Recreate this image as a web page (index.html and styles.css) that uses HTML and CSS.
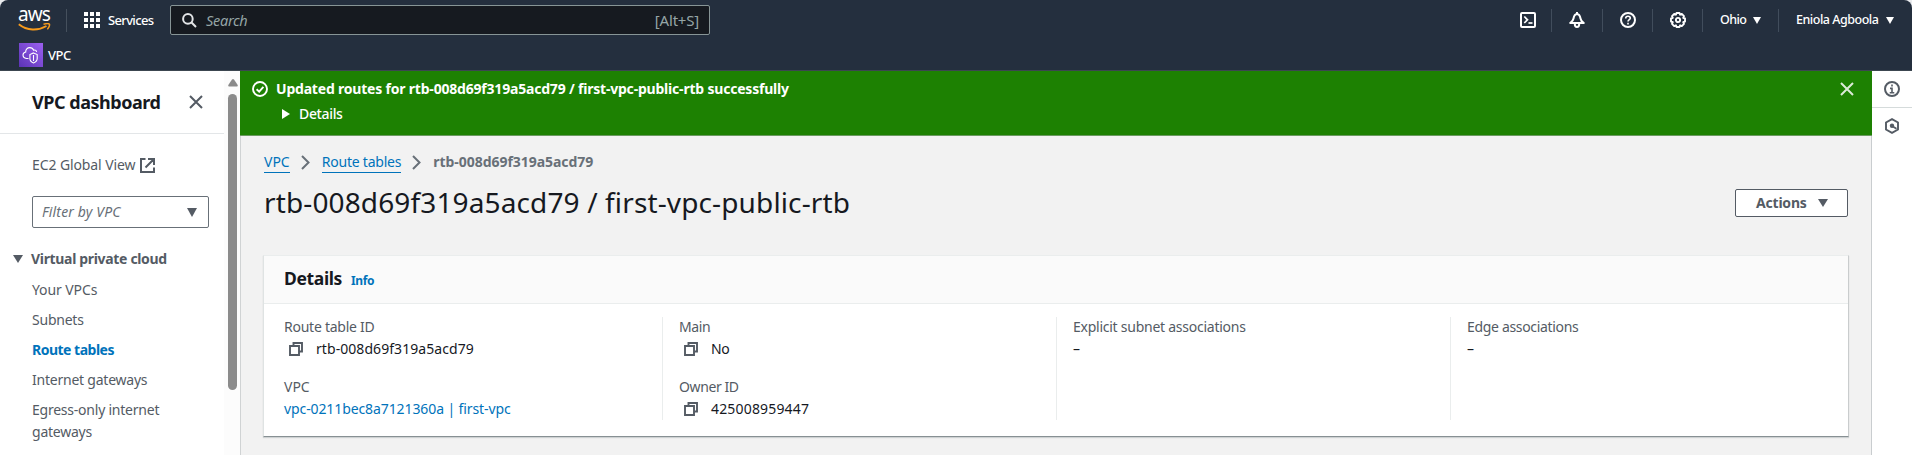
FILE: index.html
```html
<!DOCTYPE html>
<html lang="en">
<head>
<meta charset="utf-8">
<title>VPC dashboard</title>
<link rel="stylesheet" href="styles.css">
</head>
<body>
<header class="top">
  <div class="nav">
    <div class="logo">
      <span class="logo-text">aws</span>
      <svg class="smile" width="34" height="9" viewBox="0 0 34 9"><path d="M.8 1.200C9 7.800 20 8 28.500 3" fill="none" stroke="#f79b1c" stroke-width="1.900"/><path d="M25.500 1.300C28 .6 30.800 .5 31.400 1.200C31.800 2 30.800 4.600 29.400 6.400" fill="none" stroke="#f79b1c" stroke-width="1.500"/></svg>
    </div>
    <div class="services">
      <svg width="16" height="16" viewBox="0 0 16 16" fill="#fff"><path d="M0 0h4v4H0zM6 0h4v4H6zM12 0h4v4h-4zM0 6h4v4H0zM6 6h4v4H6zM12 6h4v4h-4zM0 12h4v4H0zM6 12h4v4H6zM12 12h4v4h-4z"/></svg>
      <span class="services-text">Services</span>
    </div>
    <div class="search">
      <svg width="15" height="15" viewBox="0 0 15 15" fill="none" stroke="#e3e5e7" stroke-width="2"><circle cx="5.900" cy="5.900" r="4.800"/><path d="M9.300 9.300L14 14"/></svg>
      <span class="search-text">Search</span>
      <span class="search-key">[Alt+S]</span>
    </div>
    <div class="tools">
      <div class="tool"><svg width="16" height="16" viewBox="0 0 16 16" fill="none" stroke="#fff" stroke-width="2"><rect x="1" y="1" width="14" height="14" rx="1"/><path d="M4.300 4.500L7.500 7.800L4.300 11" stroke-width="1.700"/><path d="M8.500 11h4" stroke-width="1.700"/></svg></div>
      <div class="tool wide"><svg width="16" height="16" viewBox="0 0 16 16" fill="none" stroke="#fff" stroke-width="2" stroke-linejoin="round"><path d="M8 2C5.700 2.300 4.900 4 4.500 6.500C4.200 8.500 2.800 9.900 1.200 11H14.800C13.200 9.900 11.800 8.500 11.500 6.500C11.100 4 10.300 2.300 8 2z"/><path d="M8 0v2"/><path d="M5.800 12c0 1.800.8 2.900 2.200 2.900s2.200-1.100 2.200-2.900"/></svg></div>
      <div class="tool"><svg width="16" height="16" viewBox="0 0 16 16" fill="none" stroke="#fff" stroke-width="2"><circle cx="8" cy="8" r="7"/><path d="M5.700 6.400C5.700 4.900 6.700 4.200 8 4.200s2.300.8 2.300 2C10.300 7.700 8 7.700 8 9.600M8 10.700v1.700" stroke-width="1.600"/></svg></div>
      <div class="tool"><svg width="16" height="16" viewBox="0 0 16 16" fill="none" stroke="#fff" stroke-width="1.900" stroke-linejoin="round"><path d="M6.500 1h3l.6 1.700 1.700-.8 2.200 2.200-.8 1.700 1.800.7v3l-1.800.7.8 1.700-2.200 2.200-1.700-.8L9.500 15h-3l-.6-1.700-1.700.8L2 11.900l.8-1.700L1 9.500v-3l1.800-.7L2 4.100l2.200-2.200 1.700.8z"/><circle cx="8" cy="8" r="2.100"/></svg></div>
      <div class="region"><span class="t-ohio">Ohio</span><svg width="8" height="7" viewBox="0 0 8 7"><path d="M0 0h8L4 7z" fill="#fff"/></svg></div>
      <div class="user"><span class="t-user">Eniola Agboola</span><svg width="8" height="7" viewBox="0 0 8 7"><path d="M0 0h8L4 7z" fill="#fff"/></svg></div>
    </div>
  </div>
  <div class="favorites">
    <svg width="24" height="24" viewBox="0 0 24 24"><defs><linearGradient id="vpc" x1="0" y1="1" x2="1" y2="0"><stop offset="0" stop-color="#5a33b5"/><stop offset="1" stop-color="#9c60f0"/></linearGradient></defs><rect width="24" height="24" fill="url(#vpc)"/><g fill="none" stroke="#fff" stroke-width="1.100"><path d="M9.500 15.500H7.500C5.300 15.200 4 13.800 4 12.100c0-1.600 1-2.700 2.700-3.100C6.600 6.500 8.300 4.600 10.800 4.600c2 0 3.200 1 3.900 2.700C16.500 6.600 17.600 7.600 17.500 9"/><path d="M14.500 9.900L18.200 11.500V15.500C18.200 17.600 16.800 19 14.500 20C12.200 19 10.900 17.600 10.900 15.500V11.500zM14.500 12v6"/></g></svg>
    <span class="t-fav">VPC</span>
  </div>
</header>
<div class="body">
  <aside class="side">
    <div class="side-main">
      <div class="side-head">
        <span class="side-title">VPC dashboard</span>
        <svg width="14" height="14" viewBox="0 0 14 14" stroke="#545b64" stroke-width="2"><path d="M1 1l12 12M13 1L1 13"/></svg>
      </div>
      <div class="side-link"><span class="t-ec2">EC2 Global View</span><svg width="15" height="15" viewBox="0 0 15 15" fill="none" stroke="#545b64" stroke-width="2"><path d="M5.500 1H1v13h13V9.500M8 1h6v6M14 1L5.500 9.500"/></svg></div>
      <div class="filter"><span class="t-filter">Filter by VPC</span><svg width="10" height="9" viewBox="0 0 10 9"><path d="M0 0h10L5 9z" fill="#545b64"/></svg></div>
      <div class="group"><svg width="10" height="8" viewBox="0 0 10 8"><path d="M0 0h10L5 8z" fill="#545b64"/></svg><span class="t-group">Virtual private cloud</span></div>
      <nav class="menu">
        <a class="t-your">Your VPCs</a>
        <a class="t-wide">Subnets</a>
        <a class="active">Route tables</a>
        <a class="t-wide">Internet gateways</a>
        <a class="t-wide">Egress-only internet<br>gateways</a>
      </nav>
    </div>
    <div class="scroll"><svg width="10" height="8" viewBox="0 0 10 8"><path d="M4 .6Q5-.4 6 .6L9.700 6Q10 7.500 9 7.500H1Q0 7.500.3 6z" fill="#8a8a8a"/></svg><div class="thumb"></div></div>
  </aside>
  <main class="main">
    <section class="flash">
      <svg class="flash-ok" width="16" height="16" viewBox="0 0 16 16" fill="none" stroke="#fff" stroke-width="1.900"><circle cx="8" cy="8" r="7"/><path d="M4.600 8.200L7.200 10.600L11.400 5.900"/></svg>
      <div class="flash-text">
        <div class="flash-title">Updated routes for rtb-008d69f319a5acd79 / first-vpc-public-rtb successfully</div>
        <div class="flash-more"><svg width="8" height="10" viewBox="0 0 8 10"><path d="M0 0l8 5-8 5z" fill="#fff"/></svg><span>Details</span></div>
      </div>
      <svg class="flash-close" width="14" height="14" viewBox="0 0 14 14" stroke="#dcebd8" stroke-width="2"><path d="M1 1l12 12M13 1L1 13"/></svg>
    </section>
    <div class="content">
      <div class="crumbs">
        <a class="c-vpc">VPC</a>
        <svg width="9" height="15" viewBox="0 0 9 15" fill="none" stroke="#687078" stroke-width="2"><path d="M1 1l6.500 6.500L1 14"/></svg>
        <a class="c-rt">Route tables</a>
        <svg width="9" height="15" viewBox="0 0 9 15" fill="none" stroke="#687078" stroke-width="2"><path d="M1 1l6.500 6.500L1 14"/></svg>
        <span class="c-last">rtb-008d69f319a5acd79</span>
      </div>
      <div class="heading">
        <h1>rtb-008d69f319a5acd79 / first-vpc-public-rtb</h1>
        <button class="actions"><span>Actions</span><svg width="10" height="8" viewBox="0 0 10 8"><path d="M0 0h10L5 8z" fill="#545b64"/></svg></button>
      </div>
      <section class="card">
        <div class="card-head"><h2>Details</h2><a>Info</a></div>
        <div class="cols">
          <div class="col">
            <div class="field"><div class="label l26">Route table ID</div><div class="value"><svg class="copy" width="14" height="14" viewBox="0 0 14 14" fill="none" stroke="#545b64" stroke-width="1.900"><path d="M1 4h9v9H1zM4.500 4V1H13v8.500h-3"/></svg><span class="v-rtb">rtb-008d69f319a5acd79</span></div></div>
            <div class="field"><div class="label">VPC</div><div class="value"><a>vpc-0211bec8a7121360a | first-vpc</a></div></div>
          </div>
          <div class="col">
            <div class="field"><div class="label l40">Main</div><div class="value"><svg class="copy" width="14" height="14" viewBox="0 0 14 14" fill="none" stroke="#545b64" stroke-width="1.900"><path d="M1 4h9v9H1zM4.500 4V1H13v8.500h-3"/></svg><span class="l40">No</span></div></div>
            <div class="field"><div class="label l40">Owner ID</div><div class="value"><svg class="copy" width="14" height="14" viewBox="0 0 14 14" fill="none" stroke="#545b64" stroke-width="1.900"><path d="M1 4h9v9H1zM4.500 4V1H13v8.500h-3"/></svg><span class="v-num">425008959447</span></div></div>
          </div>
          <div class="col"><div class="field"><div class="label l26">Explicit subnet associations</div><div class="value">–</div></div></div>
          <div class="col"><div class="field"><div class="label l32">Edge associations</div><div class="value">–</div></div></div>
        </div>
      </section>
    </div>
  </main>
  <aside class="rail">
    <div class="rail-item"><svg width="16" height="16" viewBox="0 0 16 16" fill="none" stroke="#545b64" stroke-width="2"><circle cx="8" cy="8" r="7"/><path d="M8 3.600v1.800M6 7.400h2v4M5.700 11.700h4.600" stroke-width="1.600"/></svg></div>
    <div class="rail-item last"><svg width="16" height="16" viewBox="0 0 16 16" fill="none" stroke="#545b64" stroke-width="1.900"><path d="M8 1.100L14 4.500v7L8 14.900L2 11.500v-7z"/><circle cx="8" cy="7.800" r="2.200" fill="#545b64" stroke="none"/><path d="M8 8l4.500 2.800"/></svg></div>
  </aside>
</div>
</body>
</html>
```
FILE: styles.css
```css
* { box-sizing: border-box; }
body {
  margin: 0;
  height: 455px;
  overflow: hidden;
  display: flex;
  flex-direction: column;
  background: #e9ebee;
  color: #16191f;
  font: 14px/22px "Noto Sans", "Open Sans", sans-serif;
}
svg { display: block; flex: none; }
span, a, h1, h2 { white-space: nowrap; }

.top {
  flex: none;
  height: 71px;
  background: #242f3e;
  border-radius: 8px 8px 0 0;
  border-bottom: 1px solid #3c4650;
  color: #fff;
}
.nav { display: flex; align-items: center; height: 40px; }
.logo {
  width: 67px;
  height: 23px;
  padding-left: 18px;
  border-right: 1px solid #45505d;
}
.logo-text {
  display: block;
  height: 14px;
  font: 400 19px/11px "Noto Sans", sans-serif;
  letter-spacing: -0.9px;
}
.smile { margin-top: 0; }
.services { display: flex; align-items: center; width: 103px; padding-left: 17px; gap: 8px; }
.services-text { font-weight: 500; font-size: 13px; letter-spacing: -0.65px; }
.search {
  display: flex;
  align-items: center;
  width: 540px;
  height: 30px;
  padding: 0 10px 0 11px;
  border: 1px solid #879596;
  border-radius: 2px;
  background: #161a20;
  color: #95a5a6;
}
.search-text { margin-left: 9px; font-style: italic; font-size: 14.5px; letter-spacing: -0.3px; }
.search-key { margin-left: auto; font-size: 15px; letter-spacing: -0.2px; }
.tools { display: flex; align-items: center; margin-left: auto; font-weight: 500; font-size: 12.5px; }
.tool {
  display: flex;
  align-items: center;
  width: 50px;
  height: 23px;
  padding-left: 17px;
  border-right: 1px solid #414d5c;
}
.tool:first-child { padding-left: 18px; }
.tool.wide { width: 51px; }
.region, .user { display: flex; align-items: center; height: 23px; }
.region { width: 76px; padding: 0 17px; justify-content: space-between; border-right: 1px solid #414d5c; }
.user { width: 133px; padding: 0 18px 0 17px; justify-content: space-between; }
.t-ohio { letter-spacing: -0.6px; }
.t-user { letter-spacing: -0.48px; }
.favorites { display: flex; align-items: center; gap: 5px; height: 30px; padding-left: 19px; }
.t-fav { margin-top: -1px; font-weight: 500; font-size: 13px; letter-spacing: -0.5px; }

.body { flex: 1; display: flex; min-height: 0; background: #fff; }
.side { display: flex; width: 240px; }
.side-main { width: 224px; color: #545b64; overflow: hidden; }
.side-head {
  display: flex;
  align-items: center;
  justify-content: space-between;
  height: 63px;
  padding: 0 21px 0 32px;
  border-bottom: 1px solid #e3e6e8;
}
.side-title { font-weight: 700; font-size: 18px; letter-spacing: -0.46px; color: #16191f; }
.side-link { display: flex; align-items: center; gap: 5px; height: 22px; margin: 20px 0 0 32px; }
.t-ec2 { letter-spacing: -0.1px; }
.filter {
  display: flex;
  align-items: center;
  justify-content: space-between;
  width: 177px;
  height: 32px;
  margin: 20px 0 0 32px;
  padding: 0 11px 0 9px;
  border: 1px solid #687078;
  border-radius: 2px;
  color: #687078;
}
.t-filter { font-style: italic; letter-spacing: 0.15px; }
.group { display: flex; align-items: center; gap: 8px; height: 22px; margin: 20px 0 0 13px; }
.t-group { font-weight: 700; letter-spacing: -0.33px; }
.menu { display: flex; flex-direction: column; gap: 8px; margin: 9px 0 0 32px; }
.menu .t-your { letter-spacing: -0.1px; }
.menu .t-wide { letter-spacing: -0.23px; }
.menu .active { font-weight: 700; letter-spacing: -0.5px; color: #0073bb; }
.scroll { width: 16px; padding: 8px 0 0 4px; background: #fcfcfc; }
.thumb { width: 9px; height: 296px; margin-top: 7px; border-radius: 5px; background: #8b8b8b; }

.main { flex: 1; min-width: 0; border-left: 1px solid #d0d3d4; border-right: 1px solid #c9cdcf; background: #f2f2f2; }
.flash {
  display: flex;
  height: 65px;
  margin: 0 -1px;
  padding: 7px 18px 0 12px;
  background: #1d8102;
  border-bottom: 1px solid #6a9a60;
  color: #fff;
}
.flash-ok { margin: 3px 8px 0 0; }
.flash-text { flex: 1; }
.flash-title { font-weight: 700; letter-spacing: -0.2px; }
.flash-more { display: flex; align-items: center; gap: 9px; margin: 3px 0 0 6px; font-weight: 500; letter-spacing: -0.35px; }
.flash-close { margin-top: 4px; }
.content { padding: 15px 23px 0; }
.crumbs { display: flex; align-items: center; height: 22px; }
.crumbs svg { margin: 0 12px 0 11px; }
.crumbs a { color: #0073bb; line-height: 20px; border-bottom: 1px solid #0073bb; }
.c-rt { letter-spacing: -0.22px; }
.c-last { font-weight: 700; color: #687078; letter-spacing: -0.04px; }
.heading { display: flex; justify-content: space-between; align-items: flex-start; margin-top: 11px; height: 71px; }
h1 { margin: 0; font-weight: 400; font-size: 28px; line-height: 36px; letter-spacing: 0.13px; }
.actions {
  display: flex;
  align-items: center;
  gap: 11px;
  height: 28px;
  width: 113px;
  margin: 5px 0 0 0;
  padding: 0 0 0 20px;
  border: 1px solid #545b64;
  border-radius: 2px;
  background: #fff;
  color: #545b64;
  font: 700 14px/20px "Noto Sans", sans-serif;
  letter-spacing: -0.2px;
}
.card { height: 182px; margin: 0 -1px; background: #fff; border: 1px solid #dfe3e3; border-top-color: #eaeded; border-right-color: #c9cccd; border-bottom-color: #879093; box-shadow: 0 1px 1px rgba(0, 28, 36, .15); }
.card-head { display: flex; align-items: baseline; gap: 9px; height: 48px; padding: 9px 20px; background: #fafafa; border-bottom: 1px solid #eaeded; line-height: 26px; }
h2 { margin: 0; font-size: 17.500px; line-height: 26px; font-weight: 700; letter-spacing: -0.36px; }
.card-head a { font-weight: 700; font-size: 12px; letter-spacing: -0.4px; color: #0073bb; }
.cols { display: grid; grid-template-columns: 398px 394px 394px 1fr; height: 103px; margin-top: 13px; }
.col { display: flex; flex-direction: column; gap: 16px; padding-left: 16px; border-left: 1px solid #eaeded; }
.col:first-child { padding-left: 19px; border-left: 0; }
.col:first-child { padding-left: 20px; }
.field { margin-top: -1px; }
.field + .field { margin-top: 0; }
.label { color: #545b64; }
.value { display: flex; align-items: center; height: 22px; }
.value a { color: #0073bb; letter-spacing: -0.1px; }
.copy { margin: 0 13px 0 5px; }
.l26 { letter-spacing: -0.25px; }
.l32 { letter-spacing: -0.33px; }
.l40 { letter-spacing: -0.4px; }
.v-rtb { letter-spacing: 0.06px; }
.v-num { letter-spacing: 0.17px; }

.rail { width: 40px; }
.rail-item { display: flex; align-items: center; justify-content: center; height: 37px; border-bottom: 1px solid #d5dbdb; }
.rail-item.last { height: 36px; border-bottom: 0; }
```
